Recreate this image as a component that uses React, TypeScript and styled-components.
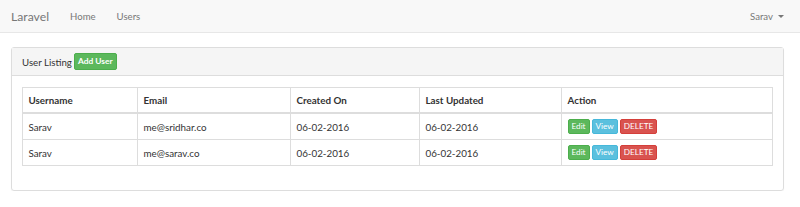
import React from "react";
import styled, { createGlobalStyle } from "styled-components";

const GlobalStyle = createGlobalStyle`
  body {
    margin: 0;
    background: #ffffff;
    font-family: Lato, "Open Sans", sans-serif;
    color: #333333;
  }
`;

const NavBar = styled.nav`
  height: 32px;
  background-color: #f8f8f8;
  border-bottom: 1px solid #e7e7e7;
  display: flex;
  align-items: center;
  padding: 0 11px;
`;

const Brand = styled.div`
  font-size: 12.2px;
  color: #777777;
  margin-right: 21px;
`;

const NavLink = styled.a`
  font-size: 9.6px;
  color: #777777;
  margin-right: 21px;
  text-decoration: none;
`;

const NavRight = styled.div`
  margin-left: auto;
  display: flex;
  align-items: center;
  gap: 5px;
  font-size: 9.6px;
  color: #777777;
  margin-right: 5px;
`;

const Caret = styled.span`
  width: 0;
  height: 0;
  border-left: 3px solid transparent;
  border-right: 3px solid transparent;
  border-top: 3px solid #777777;
  margin-top: 1px;
`;

const Container = styled.div`
  padding: 14px 16px 0 11px;
`;

const Panel = styled.div`
  border: 1px solid #dddddd;
  border-radius: 3px;
  box-shadow: 0 1px 1px rgba(0, 0, 0, 0.05);
`;

const PanelHeading = styled.div`
  background-color: #f5f5f5;
  border-bottom: 1px solid #dddddd;
  height: 27px;
  display: flex;
  align-items: center;
  padding: 0 10px;
  font-size: 9.7px;
  color: #333333;
  gap: 2px;
`;

const PanelBody = styled.div`
  padding: 11px 10px 10px;
`;

const Table = styled.table`
  width: 100%;
  border-collapse: collapse;
  border: 1px solid #dddddd;
  margin-bottom: 14px;
  font-size: 9.8px;
  table-layout: fixed;
`;

const Th = styled.th<{ $w?: number }>`
  text-align: left;
  font-weight: 700;
  height: 24px;
  padding: 0 5.5px;
  border: 1px solid #dddddd;
  border-bottom-width: 2px;
  width: ${(p) => (p.$w ? `${p.$w}px` : "auto")};
`;

const Td = styled.td`
  height: 25px;
  padding: 0 5.5px;
  border: 1px solid #dddddd;
`;

const ActionRow = styled.div`
  display: flex;
  gap: 2px;
`;

const Btn = styled.button<{ $variant: "success" | "info" | "danger" }>`
  font-family: Lato, "Open Sans", sans-serif;
  font-size: 8.2px;
  line-height: 11px;
  padding: 1px 3px;
  border-radius: 2px;
  color: #ffffff;
  border: 1px solid
    ${(p) =>
      p.$variant === "success"
        ? "#4cae4c"
        : p.$variant === "info"
        ? "#46b8da"
        : "#d43f3a"};
  background-color: ${(p) =>
    p.$variant === "success"
      ? "#5cb85c"
      : p.$variant === "info"
      ? "#5bc0de"
      : "#d9534f"};
`;

const AddBtn = styled(Btn)`
  font-weight: 700;
  font-size: 8.4px;
  padding: 2px 3px;
`;

const users = [
  { name: "Sarav", email: "me@sridhar.co", created: "06-02-2016", updated: "06-02-2016" },
  { name: "Sarav", email: "me@sarav.co", created: "06-02-2016", updated: "06-02-2016" },
];

function App() {
  return (
    <>
      <GlobalStyle />
      <NavBar>
        <Brand>Laravel</Brand>
        <NavLink href="#">Home</NavLink>
        <NavLink href="#">Users</NavLink>
        <NavRight>
          Sarav <Caret />
        </NavRight>
      </NavBar>
      <Container>
        <Panel>
          <PanelHeading>
            User Listing <AddBtn $variant="success">Add User</AddBtn>
          </PanelHeading>
          <PanelBody>
            <Table>
              <thead>
                <tr>
                  <Th $w={103}>Username</Th>
                  <Th $w={141}>Email</Th>
                  <Th $w={117}>Created On</Th>
                  <Th $w={130}>Last Updated</Th>
                  <Th>Action</Th>
                </tr>
              </thead>
              <tbody>
                {users.map((u, i) => (
                  <tr key={i}>
                    <Td>{u.name}</Td>
                    <Td>{u.email}</Td>
                    <Td>{u.created}</Td>
                    <Td>{u.updated}</Td>
                    <Td>
                      <ActionRow>
                        <Btn $variant="success">Edit</Btn>
                        <Btn $variant="info">View</Btn>
                        <Btn $variant="danger">DELETE</Btn>
                      </ActionRow>
                    </Td>
                  </tr>
                ))}
              </tbody>
            </Table>
          </PanelBody>
        </Panel>
      </Container>
    </>
  );
}

export default App;
